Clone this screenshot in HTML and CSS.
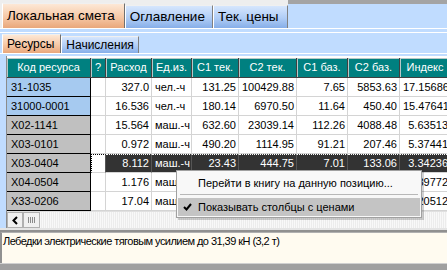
FILE: index.html
```html
<!DOCTYPE html>
<html lang="ru">
<head>
<meta charset="utf-8">
<link rel="stylesheet" href="styles.css">
</head>
<body>
<div class="app">
  <div class="tabs1">
    <div class="tab1 active">Локальная смета</div>
    <div class="tab1">Оглавление</div>
    <div class="tab1 last">Тек. цены</div>
    <div class="fill1"></div>
  </div>
  <div class="line-w"></div>
  <div class="line-b"></div>
  <div class="line-w"></div>
  <div class="tabs2">
    <div class="tab2 active">Ресурсы</div>
    <div class="tab2">Начисления</div>
  </div>
  <div class="line-w"></div>
  <div class="line-b2"></div>
  <div class="gridzone">
    <div class="gutter"></div>
    <div class="grid">
      <div class="row head">
        <div class="c">Код ресурса</div><div class="c">?</div><div class="c">Расход</div><div class="c">Ед.из.</div><div class="c">С1 тек.</div><div class="c">С2 тек.</div><div class="c">С1 баз.</div><div class="c">С2 баз.</div><div class="c">Индекс</div><div class="c"></div>
      </div>
      <div class="row">
        <div class="c code blue">31-1035</div><div class="c"></div><div class="c n">327.0</div><div class="c t">чел.-ч</div><div class="c n">131.25</div><div class="c n">100429.88</div><div class="c n">7.65</div><div class="c n">5853.63</div><div class="c n">17.15686</div><div class="c"></div>
      </div>
      <div class="row">
        <div class="c code blue">31000-0001</div><div class="c"></div><div class="c n">16.536</div><div class="c t">чел.-ч</div><div class="c n">180.14</div><div class="c n">6970.50</div><div class="c n">11.64</div><div class="c n">450.40</div><div class="c n">15.47641</div><div class="c"></div>
      </div>
      <div class="row">
        <div class="c code">X02-1141</div><div class="c"></div><div class="c n">15.564</div><div class="c t">маш.-ч</div><div class="c n">632.60</div><div class="c n">23039.14</div><div class="c n">112.26</div><div class="c n">4088.48</div><div class="c n">5.63513</div><div class="c"></div>
      </div>
      <div class="row">
        <div class="c code">X03-0101</div><div class="c"></div><div class="c n">0.972</div><div class="c t">маш.-ч</div><div class="c n">490.20</div><div class="c n">1114.95</div><div class="c n">91.21</div><div class="c n">207.46</div><div class="c n">5.37441</div><div class="c"></div>
      </div>
      <div class="row sel">
        <div class="c code">X03-0404</div><div class="c q"></div><div class="c n">8.112</div><div class="c t">маш.-ч</div><div class="c n">23.43</div><div class="c n">444.75</div><div class="c n">7.01</div><div class="c n">133.06</div><div class="c n">3.34236</div><div class="c"></div>
      </div>
      <div class="row">
        <div class="c code">X04-0504</div><div class="c"></div><div class="c n">1.176</div><div class="c t">маш.-ч</div><div class="c n">325.80</div><div class="c n">1918.96</div><div class="c n">57.13</div><div class="c n">336.43</div><div class="c n">5.39772</div><div class="c"></div>
      </div>
      <div class="row">
        <div class="c code">X33-0206</div><div class="c"></div><div class="c n">17.04</div><div class="c t">маш.-ч</div><div class="c n">50.47</div><div class="c n">860.01</div><div class="c n">9.36</div><div class="c n">159.49</div><div class="c n">5.20512</div><div class="c"></div>
      </div>
      <div class="hscroll">
        <div class="sbtn"><svg width="9" height="9" viewBox="0 0 9 9"><path d="M6 1 L2.5 4.5 L6 8" fill="none" stroke="#000" stroke-width="2"/></svg></div>
        <div class="thumb"><span></span><span></span><span></span><span></span></div>
        <div class="track"></div>
      </div>
    </div>
  </div>
  <div class="gap"></div>
  <div class="desc">Лебедки электрические тяговым усилием до 31,39 кН (3,2 т)</div>
  <div class="bottom"></div>

  <div class="menu">
    <div class="mi first">Перейти в книгу на данную позицию...</div>
    <div class="msep"></div>
    <div class="mi hl"><span class="chk"><svg width="9" height="8" viewBox="0 0 9 8"><path d="M1 4 L3.5 6.5 L8 1" fill="none" stroke="#000" stroke-width="2"/></svg></span>Показывать столбцы с ценами</div>
  </div>
</div>
</body>
</html>
```
FILE: styles.css
```css
* { box-sizing: border-box; }
html, body { margin: 0; padding: 0; }
body { width: 447px; height: 270px; overflow: hidden; background: #c0dcff; font-family: "Liberation Sans", Arial, sans-serif; color: #000; }
.app { position: relative; width: 447px; height: 270px; display: flex; flex-direction: column; }

.tabs1 { display: flex; align-items: flex-end; height: 28px; padding-left: 2px; background: #eeeeee; }
.tab1 { height: 23px; padding: 0 7px 0 4px; font-size: 13.5px; line-height: 21px; border: 1px solid #808080; border-top-color: #f0f0f0; border-left-color: #ffffff; border-bottom: none; background: linear-gradient(#d6e6fd, #b0cdf6 55%, #86aee8); white-space: nowrap; }
.tab1.active { height: 25px; line-height: 23px; padding: 0 9px 0 4px; background: linear-gradient(#fde8d6, #f6c8a6 55%, #e9a77b); border-right-color: #707070; }
.tab1.last { width: 75px; }
.fill1 { flex: 1; align-self: stretch; background: linear-gradient(#a4a4a4 0, #a4a4a4 4px, #c0dcff 4px); }

.line-w { height: 1px; background: #ffffff; }
.line-b { height: 3px; background: #c0dcff; }
.line-b2 { height: 2px; background: #c0dcff; }

.tabs2 { display: flex; align-items: flex-end; height: 20px; padding-left: 2px; }
.tab2 { height: 17px; padding: 0 4px; font-size: 12px; line-height: 16px; border: 1px solid #808080; border-left-color: #ffffff; border-top-color: #f0f0f0; border-bottom: none; background: linear-gradient(#d6e6fd, #b0cdf6 55%, #86aee8); white-space: nowrap; }
.tab2.active { height: 19px; line-height: 18px; padding: 0 6px 0 4px; background: linear-gradient(#fde8d6, #f6c8a6 55%, #e9a77b); border-right-color: #707070; }

.gridzone { display: flex; height: 172px; }
.gutter { width: 7px; background: #c0dcff; border-right: 1px solid #8c8c8c; }
.grid { flex: 1; overflow: hidden; background: #ffffff; display: flex; flex-direction: column; padding-top: 2px; }
.row { display: grid; grid-template-columns: 84px 15px 46px 40px 47px 58px 51px 52px 51px 60px; height: 19px; flex: none; font-size: 11px; }
.c { height: 19px; border-right: 1px solid #d4d4d4; border-bottom: 1px solid #d4d4d4; line-height: 18px; white-space: nowrap; overflow: hidden; padding: 0 3px; background: #ffffff; }
.c.n { text-align: right; padding-right: 2px; }
.c.t { padding-left: 3px; }
.c.code { background: #c0c0c0; border-right: 1px solid #000; border-bottom: 1px solid #000; padding-left: 4px; }
.c.code.blue { background: #a6caf0; }
.row.head { height: 20px; }
.head .c { height: 20px; line-height: 19px; background: #008080; color: #ffffff; text-align: center; border-right: 1px solid #404040; border-bottom: 1px solid #404040; box-shadow: inset 1px 1px 0 #b8c8c8; padding: 0 1px; overflow: visible; }
.sel .c { background: #333333; color: #ffffff; border-right-color: #555555; border-top: 1px dotted #ffffff; }
.sel .c.code { background: #c0c0c0; color: #000; border-top: none; border-right-color: #000; }
.sel .c.q { background: #ffffff; border-top: 1px dotted #000; border-left: 1px dotted #000; }
.sel .c { line-height: 17px; }
.sel .c.code { line-height: 18px; }

.hscroll { display: flex; height: 17px; flex: none; background: #f4f4f4; border-top: 1px solid #e0e0e0; }
.sbtn { width: 16px; height: 16px; background: #f0f0f0; border: 1px solid #b0b0b0; display: flex; align-items: center; justify-content: center; }
.thumb { width: 17px; height: 16px; background: #f0f0f0; border: 1px solid #b0b0b0; display: flex; align-items: center; justify-content: center; gap: 1px; }
.thumb span { width: 1px; height: 6px; background: #8a8a8a; }
.track { flex: 1; background: repeating-linear-gradient(90deg, #f8f8f8 0 1px, #ececec 1px 2px); }

.gap { height: 4px; background: #e4e4e4; border-bottom: 2px solid #909090; }
.desc { height: 31px; background: #fffbf0; border-left: 2px solid #909090; border-top: 1px solid #b0b0b0; font-size: 11px; letter-spacing: -0.55px; line-height: 14px; padding: 1px 1px; }
.bottom { flex: 1; background: #a0a0a0; border-top: 1px solid #d0d0d0; }

.menu { position: absolute; left: 176px; top: 170px; width: 246px; height: 48px; background: #f8f8f8; border: 1px solid #a0a0a0; box-shadow: 2px 2px 0 rgba(0,0,0,0.18); padding: 1px; font-size: 11px; }
.mi { height: 21px; line-height: 21px; padding-left: 20px; white-space: nowrap; position: relative; }
.mi.first { height: 22px; line-height: 23px; }
.msep { height: 1px; margin: 0 2px 3px; background: #b8b8b8; }
.mi.hl { height: 18px; line-height: 18px; background: #c4c4c4; }
.chk { position: absolute; left: 5px; top: 5px; display: block; width: 9px; height: 8px; }
.chk svg { display: block; }
```
